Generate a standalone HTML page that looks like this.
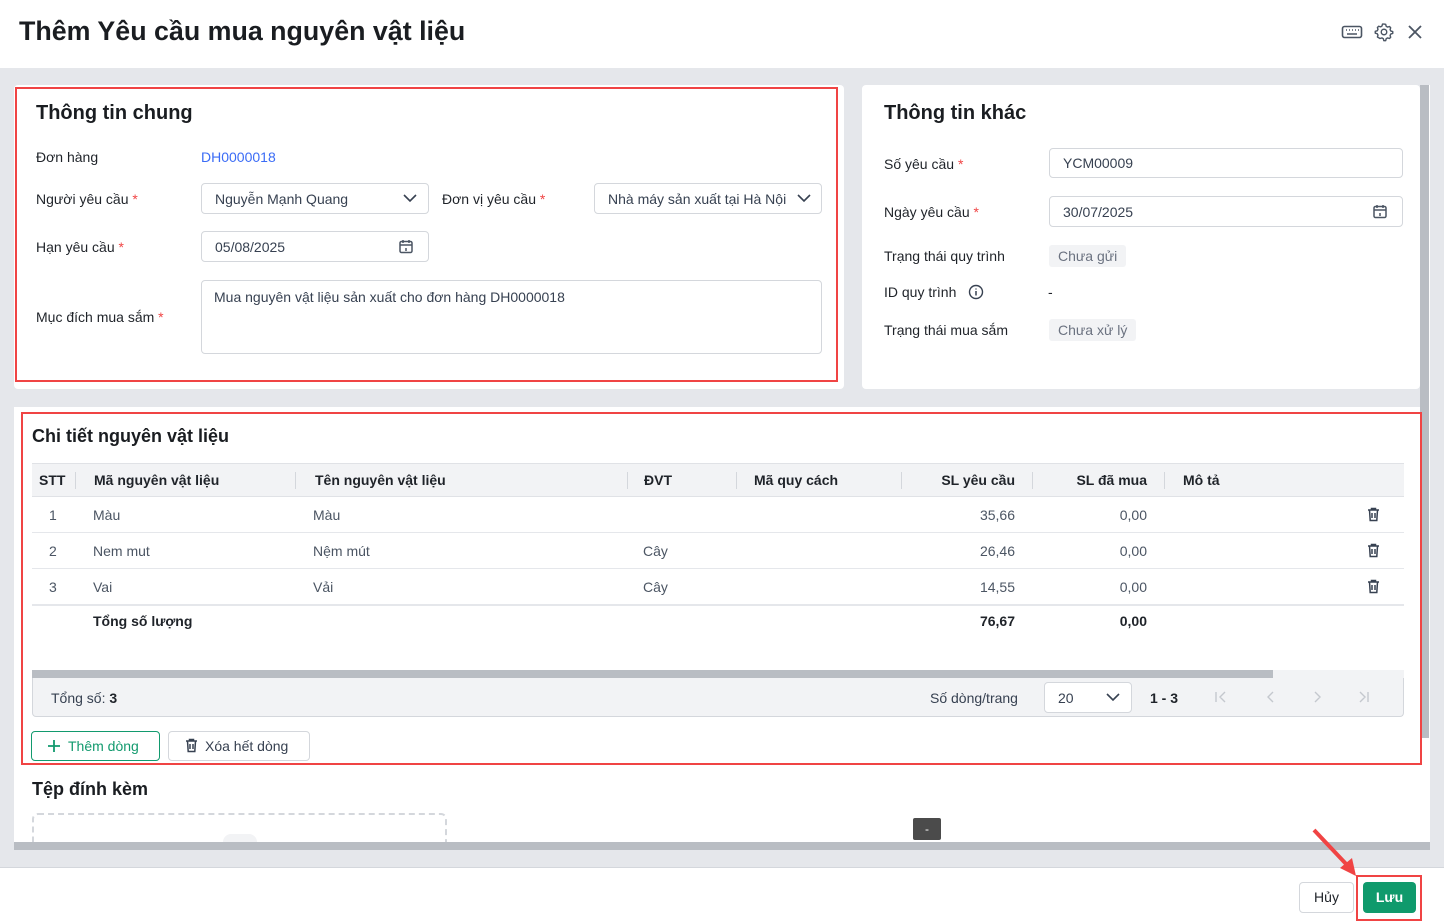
<!DOCTYPE html>
<html><head><meta charset="utf-8"><style>
*{box-sizing:border-box;margin:0;padding:0}
body{width:1444px;height:922px;position:relative;overflow:hidden;background:#fff;font-family:"Liberation Sans",sans-serif;font-size:14px;color:#1f2329}
.a{position:absolute}
.lbl{position:absolute;font-size:14px;color:#1f2329}
.req{color:#f04444}
.inp{position:absolute;border:1px solid #d4d7dc;border-radius:4px;background:#fff;font-size:14px;color:#374151;padding-left:13px;display:flex;align-items:center}
.red{position:absolute;border:2px solid #f04444}
.tag{position:absolute;background:#f2f3f5;border-radius:3px;color:#6b7280;padding:0 9px;height:22px;line-height:22px;font-size:14px}
.th{position:absolute;top:464px;height:33px;line-height:33px;font-weight:bold;font-size:14px;color:#1f2329}
.sep{position:absolute;top:472px;width:1px;height:17px;background:#d4d7dc}
.td{position:absolute;height:36px;line-height:36px;color:#4b5563;font-size:14px}
.hl{position:absolute;left:32px;width:1372px;height:1px;background:#e5e7eb}
</style></head><body>
<div class="a" style="left:19px;top:16px;font-size:26.8px;font-weight:bold;color:#1a1d21">Thêm Yêu cầu mua nguyên vật liệu</div>
<svg class="a" style="left:1341px;top:24px" width="22" height="16" viewBox="0 0 22 16"><rect x="1.5" y="2.5" width="19" height="11" rx="2" fill="none" stroke="#4b5563" stroke-width="1.6"/><path d="M5 6h1M8 6h1M11 6h1M14 6h1M17 6h1M6 10h10" stroke="#4b5563" stroke-width="1.4"/></svg>
<svg class="a" style="left:1374px;top:22px" width="20" height="20" viewBox="0 0 24 24"><path d="M12 2.5l2 .3.6 2.3 1.7 1 2.3-.7 1.4 1.5-.7 2.3 1 1.7 2.2.6v2.2l-2.2.6-1 1.7.7 2.3-1.4 1.5-2.3-.7-1.7 1-.6 2.3h-2.2l-.6-2.3-1.7-1-2.3.7L4.1 18l.7-2.3-1-1.7-2.3-.6v-2.2l2.3-.6 1-1.7L4.1 6.6 5.6 5.1l2.3.7 1.7-1 .6-2.3z" fill="none" stroke="#4b5563" stroke-width="1.7" stroke-linejoin="round"/><circle cx="12" cy="12" r="3.3" fill="none" stroke="#4b5563" stroke-width="1.7"/></svg>
<svg class="a" style="left:1407px;top:24px" width="16" height="16" viewBox="0 0 16 16"><path d="M2 2l12 12M14 2L2 14" stroke="#4b5563" stroke-width="1.8"/></svg>

<div class="a" style="left:0;top:68px;width:1444px;height:800px;background:#e5e7eb"></div>
<div class="a" style="left:0;top:867px;width:1444px;height:1px;background:#d4d7dc"></div>
<div class="a" style="left:14px;top:85px;width:830px;height:304px;background:#fff;border-radius:4px"></div>
<div class="a" style="left:862px;top:85px;width:558px;height:304px;background:#fff;border-radius:4px"></div>
<div class="a" style="left:14px;top:407px;width:1406px;height:435px;background:#fff"></div>
<div class="a" style="left:1420px;top:85px;width:10px;height:757px;background:#fff"></div>
<div class="a" style="left:1420px;top:85px;width:9px;height:653px;background:#b9bdc3"></div>

<div class="red" style="left:15px;top:87px;width:823px;height:295px"></div>
<div class="a" style="left:36px;top:102px;font-size:20px;font-weight:bold;color:#1a1d21">Thông tin chung</div>
<div class="lbl" style="left:36px;top:149px">Đơn hàng</div>
<div class="a" style="left:201px;top:149px;color:#3b6cf6">DH0000018</div>
<div class="lbl" style="left:36px;top:191px">Người yêu cầu <span class="req">*</span></div>
<div class="inp" style="left:201px;top:183px;width:228px;height:31px">Nguyễn Mạnh Quang</div>
<svg class="a" style="left:403px;top:193px" width="14" height="10" viewBox="0 0 14 10"><path d="M1 2l6 6 6-6" fill="none" stroke="#374151" stroke-width="1.6"/></svg>
<div class="lbl" style="left:442px;top:191px">Đơn vị yêu cầu <span class="req">*</span></div>
<div class="inp" style="left:594px;top:183px;width:228px;height:31px;white-space:nowrap;overflow:hidden">Nhà máy sản xuất tại Hà Nội</div>
<div class="a" style="left:796px;top:185px;width:24px;height:27px;background:#fff"></div>
<svg class="a" style="left:797px;top:193px" width="14" height="10" viewBox="0 0 14 10"><path d="M1 2l6 6 6-6" fill="none" stroke="#374151" stroke-width="1.6"/></svg>
<div class="lbl" style="left:36px;top:239px">Hạn yêu cầu <span class="req">*</span></div>
<div class="inp" style="left:201px;top:231px;width:228px;height:31px">05/08/2025</div>
<svg class="a" style="left:399px;top:239px" width="14" height="15" viewBox="0 0 14 15"><rect x="1" y="2.5" width="12" height="11" rx="1.5" fill="none" stroke="#4b5563" stroke-width="1.5"/><path d="M1 6h12M4 1v3M10 1v3M7 9v3" stroke="#4b5563" stroke-width="1.5"/></svg>
<div class="lbl" style="left:36px;top:309px">Mục đích mua sắm <span class="req">*</span></div>
<div class="inp" style="left:201px;top:280px;width:621px;height:74px;align-items:flex-start;padding-top:8px;padding-left:12px">Mua nguyên vật liệu sản xuất cho đơn hàng DH0000018</div>

<div class="a" style="left:884px;top:102px;font-size:20px;font-weight:bold;color:#1a1d21">Thông tin khác</div>
<div class="lbl" style="left:884px;top:156px">Số yêu cầu <span class="req">*</span></div>
<div class="inp" style="left:1049px;top:148px;width:354px;height:30px">YCM00009</div>
<div class="lbl" style="left:884px;top:204px">Ngày yêu cầu <span class="req">*</span></div>
<div class="inp" style="left:1049px;top:196px;width:354px;height:31px">30/07/2025</div>
<svg class="a" style="left:1373px;top:204px" width="14" height="15" viewBox="0 0 14 15"><rect x="1" y="2.5" width="12" height="11" rx="1.5" fill="none" stroke="#4b5563" stroke-width="1.5"/><path d="M1 6h12M4 1v3M10 1v3M7 9v3" stroke="#4b5563" stroke-width="1.5"/></svg>
<div class="lbl" style="left:884px;top:248px">Trạng thái quy trình</div>
<div class="tag" style="left:1049px;top:245px">Chưa gửi</div>
<div class="lbl" style="left:884px;top:284px">ID quy trình</div>
<svg class="a" style="left:968px;top:284px" width="16" height="16" viewBox="0 0 16 16"><circle cx="8" cy="8" r="6.5" fill="none" stroke="#374151" stroke-width="1.4"/><path d="M8 7v4.5M8 4.5v1" stroke="#374151" stroke-width="1.5"/></svg>
<div class="lbl" style="left:1048px;top:284px">-</div>
<div class="lbl" style="left:884px;top:322px">Trạng thái mua sắm</div>
<div class="tag" style="left:1049px;top:319px">Chưa xử lý</div>

<div class="red" style="left:21px;top:412px;width:1401px;height:353px"></div>
<div class="a" style="left:32px;top:426px;font-size:18px;font-weight:bold;color:#1a1d21">Chi tiết nguyên vật liệu</div>
<div class="a" style="left:32px;top:463px;width:1372px;height:34px;background:#f2f3f5;border-top:1px solid #e0e2e6;border-bottom:1px solid #e0e2e6"></div>
<div class="th" style="left:39px">STT</div><div class="sep" style="left:75px"></div>
<div class="th" style="left:94px">Mã nguyên vật liệu</div><div class="sep" style="left:295px"></div>
<div class="th" style="left:315px">Tên nguyên vật liệu</div><div class="sep" style="left:627px"></div>
<div class="th" style="left:644px">ĐVT</div><div class="sep" style="left:736px"></div>
<div class="th" style="left:754px">Mã quy cách</div><div class="sep" style="left:901px"></div>
<div class="th" style="left:901px;width:114px;text-align:right">SL yêu cầu</div><div class="sep" style="left:1032px"></div>
<div class="th" style="left:1033px;width:114px;text-align:right">SL đã mua</div><div class="sep" style="left:1164px"></div>
<div class="th" style="left:1183px">Mô tả</div>

<div class="td" style="left:49px;top:497px">1</div><div class="td" style="left:93px;top:497px">Màu</div><div class="td" style="left:313px;top:497px">Màu</div><div class="td" style="left:901px;top:497px;width:114px;text-align:right">35,66</div><div class="td" style="left:1033px;top:497px;width:114px;text-align:right">0,00</div>
<div class="hl" style="top:532px"></div>
<div class="td" style="left:49px;top:533px">2</div><div class="td" style="left:93px;top:533px">Nem mut</div><div class="td" style="left:313px;top:533px">Nệm mút</div><div class="td" style="left:643px;top:533px">Cây</div><div class="td" style="left:901px;top:533px;width:114px;text-align:right">26,46</div><div class="td" style="left:1033px;top:533px;width:114px;text-align:right">0,00</div>
<div class="hl" style="top:568px"></div>
<div class="td" style="left:49px;top:569px">3</div><div class="td" style="left:93px;top:569px">Vai</div><div class="td" style="left:313px;top:569px">Vải</div><div class="td" style="left:643px;top:569px">Cây</div><div class="td" style="left:901px;top:569px;width:114px;text-align:right">14,55</div><div class="td" style="left:1033px;top:569px;width:114px;text-align:right">0,00</div>
<div class="hl" style="top:604px;height:2px"></div>
<div class="td" style="left:93px;top:603px;font-weight:bold;color:#1f2329">Tổng số lượng</div>
<div class="td" style="left:901px;top:603px;width:114px;text-align:right;font-weight:bold;color:#1f2329">76,67</div>
<div class="td" style="left:1033px;top:603px;width:114px;text-align:right;font-weight:bold;color:#1f2329">0,00</div>
<svg class="a" style="left:1367px;top:507px" width="13" height="15" viewBox="0 0 13 15"><path d="M1 3h11M4.5 3V1.5h4V3M2.5 3l.7 10.5h6.6L10.5 3M5 6v5M8 6v5" fill="none" stroke="#374151" stroke-width="1.5"/></svg>
<svg class="a" style="left:1367px;top:543px" width="13" height="15" viewBox="0 0 13 15"><path d="M1 3h11M4.5 3V1.5h4V3M2.5 3l.7 10.5h6.6L10.5 3M5 6v5M8 6v5" fill="none" stroke="#374151" stroke-width="1.5"/></svg>
<svg class="a" style="left:1367px;top:579px" width="13" height="15" viewBox="0 0 13 15"><path d="M1 3h11M4.5 3V1.5h4V3M2.5 3l.7 10.5h6.6L10.5 3M5 6v5M8 6v5" fill="none" stroke="#374151" stroke-width="1.5"/></svg>

<div class="a" style="left:32px;top:670px;width:1372px;height:8px;background:#f2f3f5"></div>
<div class="a" style="left:32px;top:670px;width:1241px;height:8px;background:#b9bdc3"></div>
<div class="a" style="left:32px;top:678px;width:1372px;height:39px;background:#f2f3f5;border:1px solid #d4d7dc;border-top:none;border-radius:0 0 4px 4px"></div>
<div class="a" style="left:51px;top:690px;color:#374151">Tổng số: <b style="color:#1f2329">3</b></div>
<div class="a" style="left:930px;top:690px;color:#374151">Số dòng/trang</div>
<div class="inp" style="left:1044px;top:682px;width:88px;height:31px">20</div>
<svg class="a" style="left:1106px;top:692px" width="14" height="10" viewBox="0 0 14 10"><path d="M1 2l6 6 6-6" fill="none" stroke="#374151" stroke-width="1.6"/></svg>
<div class="a" style="left:1150px;top:690px;font-weight:bold;color:#1f2329">1 - 3</div>
<svg class="a" style="left:1214px;top:690px" width="170" height="14" viewBox="0 0 170 14"><g fill="none" stroke="#c4c8ce" stroke-width="1.4"><path d="M2 2v10M11 2L6 7l5 5M59 2l-5 5 5 5M101 2l5 5-5 5M146 2l5 5-5 5M154 2v10"/></g></svg>

<div class="a" style="left:31px;top:731px;width:129px;height:30px;border:1px solid #129a6e;border-radius:4px;color:#129a6e;line-height:28px;padding-left:36px">Thêm dòng</div>
<svg class="a" style="left:47px;top:739px" width="14" height="14" viewBox="0 0 14 14"><path d="M7 1v12M1 7h12" stroke="#129a6e" stroke-width="1.8"/></svg>
<div class="a" style="left:168px;top:731px;width:142px;height:30px;border:1px solid #d4d7dc;border-radius:4px;color:#374151;line-height:28px;padding-left:36px">Xóa hết dòng</div>
<svg class="a" style="left:185px;top:738px" width="13" height="15" viewBox="0 0 13 15"><path d="M1 3h11M4.5 3V1.5h4V3M2.5 3l.7 10.5h6.6L10.5 3M5 6v5M8 6v5" fill="none" stroke="#374151" stroke-width="1.5"/></svg>

<div class="a" style="left:32px;top:779px;font-size:18px;font-weight:bold;color:#1a1d21">Tệp đính kèm</div>
<div class="a" style="left:32px;top:813px;width:415px;height:40px;border:2px dashed #d4d7dc;border-radius:6px"></div>
<div class="a" style="left:223px;top:834px;width:34px;height:8px;border-radius:17px 17px 0 0;background:#f2f3f5"></div>
<div class="a" style="left:913px;top:818px;width:28px;height:22px;background:#4b4b4b;border-radius:2px;color:#fff;text-align:center;line-height:22px;font-size:12px">-</div>
<div class="a" style="left:14px;top:842px;width:1416px;height:8px;background:#b9bdc3"></div>
<div class="a" style="left:0;top:850px;width:1444px;height:17px;background:#e5e7eb"></div>

<div class="a" style="left:1299px;top:882px;width:55px;height:31px;border:1px solid #d4d7dc;border-radius:4px;text-align:center;line-height:29px;color:#1f2329">Hủy</div>
<div class="a" style="left:1363px;top:882px;width:53px;height:31px;background:#0f9a6c;border-radius:4px;text-align:center;line-height:31px;color:#fff;font-weight:bold">Lưu</div>
<div class="red" style="left:1356px;top:875px;width:66px;height:46px"></div>
<svg class="a" style="left:1310px;top:826px" width="50" height="52" viewBox="0 0 50 52"><path d="M4 4L38 40" stroke="#f04444" stroke-width="4"/><path d="M30 42L46 50L42 32z" fill="#f04444"/></svg>
</body></html>
